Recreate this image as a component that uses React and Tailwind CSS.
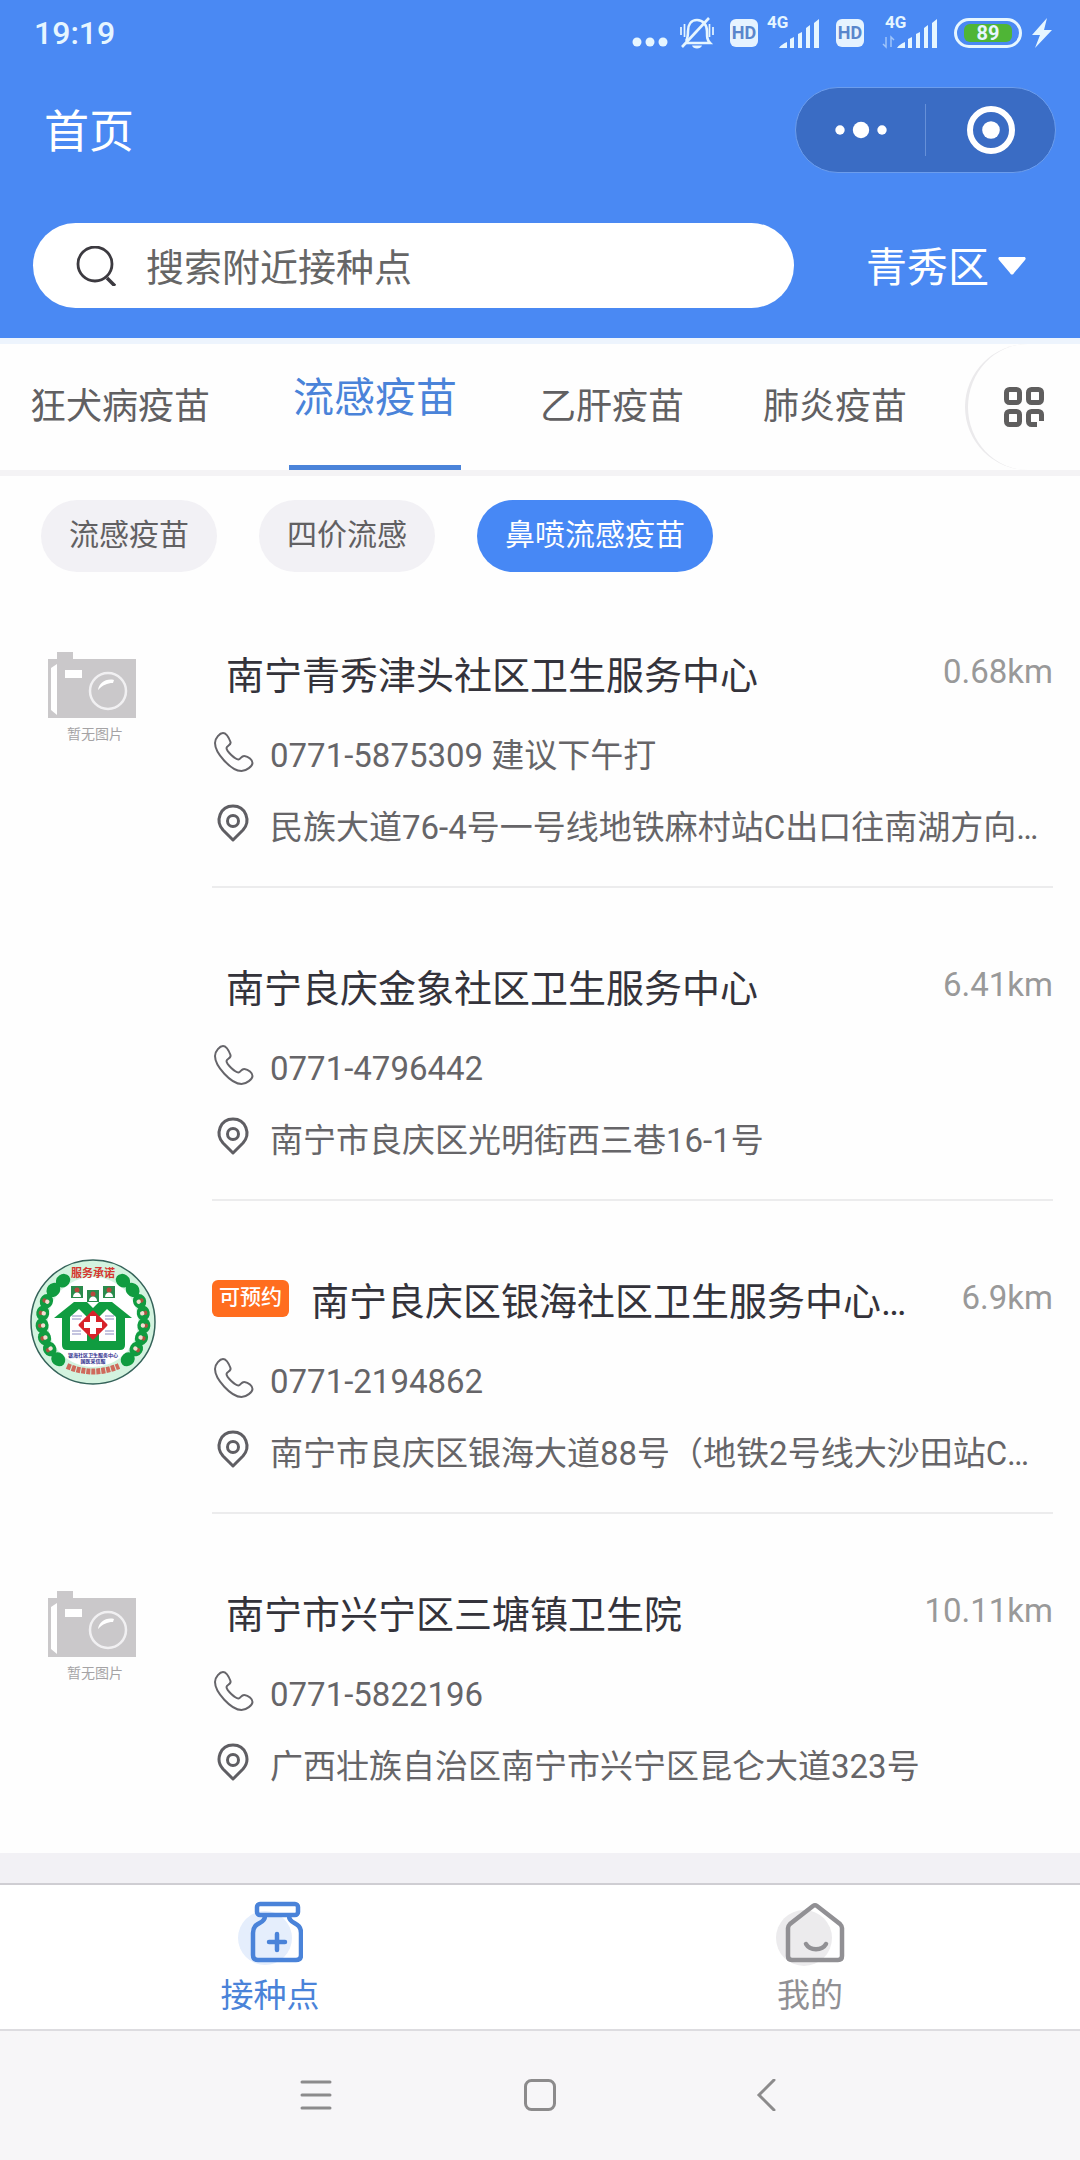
import React, { useState } from "react";

const areas = ["青秀区", "兴宁区", "良庆区", "西乡塘区"];
const vaccines = ["狂犬病疫苗", "流感疫苗", "乙肝疫苗", "肺炎疫苗"];
const subTypes = ["流感疫苗", "四价流感", "鼻喷流感疫苗"];

const clinics = [
  {
    id: 1,
    name: "南宁青秀津头社区卫生服务中心",
    distance: "0.68km",
    phone: "0771-5875309 建议下午打",
    address: "民族大道76-4号一号线地铁麻村站C出口往南湖方向…",
    image: "placeholder",
  },
  {
    id: 2,
    name: "南宁良庆金象社区卫生服务中心",
    distance: "6.41km",
    phone: "0771-4796442",
    address: "南宁市良庆区光明街西三巷16-1号",
  },
  {
    id: 3,
    name: "南宁良庆区银海社区卫生服务中心…",
    distance: "6.9km",
    phone: "0771-2194862",
    address: "南宁市良庆区银海大道88号（地铁2号线大沙田站C…",
    image: "emblem",
    bookable: true,
  },
  {
    id: 4,
    name: "南宁市兴宁区三塘镇卫生院",
    distance: "10.11km",
    phone: "0771-5822196",
    address: "广西壮族自治区南宁市兴宁区昆仑大道323号",
    image: "placeholder",
  },
];

/* ---------- status bar ---------- */

const BellOff = () => (
  <svg width="34" height="34" viewBox="0 0 34 34" fill="none" stroke="currentColor" strokeWidth="2.6">
    <path d="M5 27h25c-3-3-3-6-3-12 0-6-4-11-10-11S8 9 8 15c0 4 0 7-2 10" />
    <path d="M2 31 29 2" />
    <path d="M1 11v8M4.500 8v13M29.500 8v13M33 11v8" strokeWidth="1.700" />
    <path d="M12 29.500h10c-1 4-9 4-10 0Z" fill="currentColor" stroke="none" />
  </svg>
);

const HdBadge = () => (
  <span className="flex h-7 w-7 items-center justify-center rounded-md bg-[#e6f3ff] text-lg font-bold text-[#5a86cc]">
    HD
  </span>
);

const Signal = ({ arrows }) => (
  <svg width="56" height="50" viewBox="0 -8 56 50" fill="currentColor">
    <text x="3" y="12" fontSize="17" fontWeight="700">4G</text>
    <path d="M15 32c2-3 4-4 8-6v6ZM26 32V23l4-2v11ZM34 32V18l4-2v16ZM42 32V12l4-3v23ZM50 32V7l5-4v29Z" />
    {arrows && (
      <path d="M4 21v10L1 28M9 31V21l3 3" fill="none" stroke="currentColor" strokeWidth="1.500" opacity=".55" />
    )}
  </svg>
);

const StatusBar = () => (
  <div className="flex h-[66px] items-center justify-between pr-7 pl-[34px] text-[#e6f6ff]">
    <span className="text-[32px] font-medium">19:19</span>
    <div className="flex items-center">
      <svg width="36" height="34" viewBox="0 0 36 34" fill="currentColor" className="mr-3">
        <circle cx="5" cy="26" r="4.500" />
        <circle cx="18" cy="26" r="4.500" />
        <circle cx="31" cy="26" r="4.500" />
      </svg>
      <BellOff />
      <span className="ml-4"><HdBadge /></span>
      <span className="ml-[6px]"><Signal /></span>
      <span className="ml-4"><HdBadge /></span>
      <span className="ml-[18px]"><Signal arrows /></span>
      <span className="ml-4 flex h-[30px] w-[68px] rounded-full border-[3px] border-current p-[3px]">
        <span className="mx-1 flex flex-1 items-center justify-center rounded-md bg-[#4fb536] text-xl font-bold">
          89
        </span>
      </span>
      <svg width="20" height="30" viewBox="0 0 20 30" fill="currentColor" className="ml-[10px]">
        <path d="M15 0 0 17h8L3 30 20 12h-8Z" />
      </svg>
    </div>
  </div>
);

/* ---------- header ---------- */

const TitleBar = () => (
  <div className="flex h-32 items-center justify-between pr-6 pl-11">
    <h1 className="pt-[6px] text-[45px] text-white">首页</h1>
    <div className="flex h-[86px] w-[261px] items-center rounded-full border border-[#6c9dec] bg-[#3a6cc4]">
      <button type="button" aria-label="更多" className="flex flex-1 justify-center">
        <svg width="52" height="18" viewBox="0 0 52 18" fill="#fff">
          <circle cx="5" cy="9" r="4.700" />
          <circle cx="26" cy="9" r="8.200" />
          <circle cx="47" cy="9" r="4.700" />
        </svg>
      </button>
      <span className="h-[52px] w-px bg-[#6690d8]" />
      <button type="button" aria-label="关闭" className="flex flex-1 justify-center">
        <svg width="48" height="48" viewBox="0 0 48 48">
          <circle cx="24" cy="24" r="21" fill="none" stroke="#fff" strokeWidth="6" />
          <circle cx="24" cy="24" r="8.800" fill="#fff" />
        </svg>
      </button>
    </div>
  </div>
);

const SearchBar = () => {
  const [keyword, setKeyword] = useState("");
  const [area, setArea] = useState(areas[0]);

  return (
    <div className="flex items-center justify-between pt-[29px] pr-[54px] pb-[30px] pl-[33px]">
      <label className="flex h-[85px] w-[761px] items-center rounded-full bg-white pl-[43px]">
        <svg width="40" height="40" viewBox="0 0 40 40" fill="none" stroke="#3c3a40" strokeWidth="2.800">
          <circle cx="19" cy="18" r="17" />
          <path d="m31 32 8 8" strokeWidth="3.500" />
        </svg>
        <input
          type="text"
          aria-label="搜索附近接种点"
          placeholder="搜索附近接种点"
          value={keyword}
          onChange={(e) => setKeyword(e.target.value)}
          className="ml-[30px] min-w-0 flex-1 bg-transparent pt-[6px] text-[38px] text-[#555] outline-none placeholder:text-[#666]"
        />
      </label>
      <label className="flex items-center gap-2 text-white">
        <select
          aria-label="区域"
          value={area}
          onChange={(e) => setArea(e.target.value)}
          className="w-[124px] appearance-none bg-transparent pt-[6px] text-[41px] outline-none"
        >
          {areas.map((item) => (
            <option key={item} value={item}>{item}</option>
          ))}
        </select>
        <svg width="28" height="18" viewBox="0 0 28 18" fill="#fff">
          <path d="M2 0h24c2 0 2 2 1 3L16 16c-1 2-3 2-4 0L1 3C0 2 0 0 2 0Z" />
        </svg>
      </label>
    </div>
  );
};

/* ---------- vaccine tabs ---------- */

const VaccineTabs = () => {
  const [active, setActive] = useState("流感疫苗");

  return (
    <nav className="flex h-[138px] items-stretch border-y-[6px] border-t-[#edf4fd] border-b-[#f4f3f5] pl-[30px]">
      <div className="flex flex-1 justify-between pr-[58px]">
        {vaccines.map((name) => (
          <button
            key={name}
            type="button"
            onClick={() => setActive(name)}
            className={
              name === active
                ? "border-b-[5px] border-[#4a83d9] px-1 pb-3 text-[41px] text-[#4a83d9]"
                : "text-[36px] text-[#616062]"
            }
          >
            {name}
          </button>
        ))}
      </div>
      <button
        type="button"
        aria-label="全部疫苗"
        className="flex w-[115px] items-center justify-center rounded-l-full border-l-3 border-[#ebeaec]"
      >
        <svg width="40" height="40" viewBox="0 0 40 40" fill="none" stroke="#5f5e5e" strokeWidth="5">
          <rect x="2.500" y="2.500" width="13" height="13" rx="3" />
          <rect x="24.500" y="2.500" width="13" height="13" rx="3" />
          <rect x="2.500" y="24.500" width="13" height="13" rx="3" />
          <path d="M37.500 34v-6.500a3 3 0 0 0-3-3h-7a3 3 0 0 0-3 3v7a3 3 0 0 0 3 3H33" />
        </svg>
      </button>
    </nav>
  );
};

const SubTypes = () => {
  const [active, setActive] = useState("鼻喷流感疫苗");

  return (
    <div className="flex gap-[42px] px-[41px] pt-6">
      {subTypes.map((name) => (
        <button
          key={name}
          type="button"
          onClick={() => setActive(name)}
          className={`h-[72px] rounded-full px-7 pb-1 text-[30px] ${
            name === active ? "bg-[#4788f5] text-white" : "bg-[#f2f1f5] text-[#616062]"
          }`}
        >
          {name}
        </button>
      ))}
    </div>
  );
};

/* ---------- clinic list ---------- */

const Placeholder = () => (
  <div className="flex flex-col items-center pt-[19px] pr-[2px]">
    <svg width="88" height="66" viewBox="0 0 88 66">
      <path d="M9 0h16v7h63v59H0V7h9Z" fill="#cac8ca" />
      <path d="M3 16l6-4v51l-6-5Z" fill="#fff" />
      <rect x="17" y="18" width="17" height="8" fill="#fff" />
      <circle cx="60" cy="39" r="18" fill="none" stroke="#f1f0f2" strokeWidth="2.500" />
      <path d="M50 38c1-7 8-12 16-10l-1 3c-6 0-10 2-15 7Z" fill="#fff" />
    </svg>
    <span className="mt-[6px] pl-[6px] text-[14px] text-[#a5a3a5]">暂无图片</span>
  </div>
);

const Leaf = ({ angle, dot }) => (
  <g transform={`rotate(${angle} 63 63)`}>
    <ellipse cx="63" cy="12" rx="7.500" ry="6.500" fill="#109c40" />
    {dot && (
      <>
        <circle cx="63" cy="10" r="2.200" fill="#a8543f" />
        <circle cx="63" cy="13" r="2.200" fill="#f3ded2" />
      </>
    )}
  </g>
);

const Emblem = () => (
  <svg width="126" height="126" viewBox="0 0 126 126">
    <circle cx="63" cy="63" r="62" fill="#d3f3df" stroke="#35635a" strokeWidth="1.500" />
    <circle cx="63" cy="63" r="45" fill="#fff" />
    {[36, 51, 66, 80, 94, 108, 122, 137].map((angle, i) => (
      <g key={angle}>
        <Leaf angle={angle} dot={i > 1 && i < 7} />
        <Leaf angle={-angle} dot={i > 1 && i < 7} />
      </g>
    ))}
    <text x="63" y="18" fontSize="11" fontWeight="700" fill="#d6362f" textAnchor="middle">服务承诺</text>
    {[[41, 27], [57, 31], [73, 27]].map(([x, y]) => (
      <g key={x}>
        <rect x={x} y={y} width="12" height="12" fill="#2a8b4c" />
        <circle cx={x + 6} cy={y + 4} r="2.500" fill="#b8483c" />
        <path d={`M${x + 2} ${y + 11}c0-6 8-6 8 0Z`} fill="#fff" />
      </g>
    ))}
    <path d="M24 59 44 43h13l6 6 6-6h13l20 16h-7v27q0 5-5 5H37q-5 0-5-5V59Z" fill="#109c40" />
    <path d="M40 58l9-8 8 8v24H40ZM69 58l8-8 9 8v24H69Z" fill="#fff" />
    <path d="M42 57h10M42 60h9M42 72h9M42 75h9M75 57h9M75 60h9M75 72h9M75 75h9" stroke="#8a8ac0" strokeWidth="1" />
    <path d="M63 53 76 66 63 79 50 66Z" fill="#d8232a" stroke="#d8232a" strokeWidth="3" strokeLinejoin="round" />
    <path d="M60 57h6v6h6v6h-6v6h-6v-6h-6v-6h6Z" fill="#fff" />
    <text x="63" y="98" fontSize="5" fontWeight="700" fill="#2d2d8c" textAnchor="middle">银海社区卫生服务中心</text>
    <text x="63" y="104" fontSize="5" fontWeight="700" fill="#2d2d8c" textAnchor="middle">国医采信服</text>
    <path d="M37 107q26 11 52 0" fill="none" stroke="#cf6a5c" strokeWidth="6" strokeDasharray="4 1" />
  </svg>
);

const PhoneIcon = () => (
  <svg width="40" height="40" viewBox="0 0 40 40" fill="none" stroke="#66656a" strokeWidth="2" strokeLinejoin="round" className="mb-2 shrink-0">
    <path d="M9 1c3 0 6 5 7.500 9 1 3-4 4-4 6 0 3 8 11 12 11.500 2 0 3-4 6-3.500 4 .5 8 4 8 7s-6 8-11 8C17 39 1 21 1 11 1 6 6 1 9 1Z" />
  </svg>
);

const PinIcon = () => (
  <svg width="40" height="40" viewBox="0 0 40 40" fill="none" stroke="#5f5e63" strokeWidth="3" className="mb-2 shrink-0">
    <path d="M19 36 9 26C1 17 6 2 19 2S37 17 29 26Z" strokeLinejoin="round" />
    <circle cx="19" cy="17" r="5.500" />
  </svg>
);

const ClinicRow = ({ clinic, last }) => (
  <li className="flex h-[313px] pr-[27px] pl-[30px]">
    <div className="w-[126px] shrink-0 pt-[58px]">
      {clinic.image === "placeholder" && <Placeholder />}
      {clinic.image === "emblem" && <Emblem />}
    </div>
    <div className={`ml-14 min-w-0 flex-1 pt-[73px] ${last ? "" : "border-b-2 border-[#ececed]"}`}>
      <div className="flex h-14 items-center">
        {clinic.bookable && (
          <span className="mr-2 mb-2 flex h-[37px] w-[77px] shrink-0 items-center justify-center rounded-md bg-[#ff6d1f] text-[21px] font-medium text-white">
            可预约
          </span>
        )}
        <h2 className="truncate pl-[14px] text-[38px] text-[#34333b]">{clinic.name}</h2>
        <span className="ml-auto pb-2 text-[33px] text-[#999]">{clinic.distance}</span>
      </div>
      <div className="mt-7 flex h-12 items-center gap-4 pl-[2px] text-[33px] text-[#666568]">
        <PhoneIcon />
        <span>{clinic.phone}</span>
      </div>
      <div className="mt-6 flex h-12 items-center gap-4 pl-[2px] text-[33px] text-[#666568]">
        <PinIcon />
        <span className="truncate">{clinic.address}</span>
      </div>
    </div>
  </li>
);

/* ---------- bottom bars ---------- */

const BottomTabs = () => (
  <nav className="grid h-[148px] grid-cols-2 border-y-2 border-t-[#cfced3] border-b-[#dddce0] bg-white text-[33px]">
    <a href="#clinics" className="flex flex-col items-center gap-1 pt-4 text-[#4a83d9]">
      <svg width="66" height="66" viewBox="0 0 66 66" fill="none" stroke="currentColor" strokeWidth="4.500">
        <circle cx="28" cy="37" r="27" fill="#e5eefc" stroke="none" />
        <rect x="20" y="3" width="41" height="11" rx="3" />
        <path d="M28 15c0 9-12 5-12 17v22q0 5 5 5h38q5 0 5-5V32c0-12-12-8-12-17" />
        <path d="M40 33v16M32 41h16" strokeLinecap="round" />
      </svg>
      <span>接种点</span>
    </a>
    <a href="#mine" className="flex flex-col items-center gap-1 pt-4 text-[#919094]">
      <svg width="70" height="66" viewBox="0 0 70 66" fill="none" stroke="currentColor" strokeWidth="4.500">
        <circle cx="29" cy="37" r="28" fill="#ecebed" stroke="none" />
        <path d="M38 5q2-1.500 4 0l23 18q2 2 2 4v28q0 4-4 4H17q-4 0-4-4V27q0-2 2-4Z" />
        <path d="M31 43c4 7 16 7 20 0" strokeLinecap="round" />
      </svg>
      <span>我的</span>
    </a>
  </nav>
);

const SystemNav = () => (
  <div className="flex h-[129px] items-center justify-center gap-40 bg-[#f7f6f8] pb-[2px] text-[#8c8b8c]">
    <button type="button" aria-label="菜单" className="flex w-16 justify-center">
      <svg width="32" height="32" viewBox="0 0 32 32" fill="none" stroke="currentColor" strokeWidth="3" strokeLinecap="round">
        <path d="M2 3h28M2 16h28M2 29h28" />
      </svg>
    </button>
    <button type="button" aria-label="主屏幕" className="flex w-16 justify-center">
      <svg width="32" height="32" viewBox="0 0 32 32" fill="none" stroke="currentColor" strokeWidth="3">
        <rect x="1.500" y="1.500" width="29" height="29" rx="6" />
      </svg>
    </button>
    <button type="button" aria-label="返回" className="flex w-16 justify-center">
      <svg width="32" height="32" viewBox="0 0 32 32" fill="none" stroke="currentColor" strokeWidth="3" strokeLinecap="round">
        <path d="M26 1 11 16l15 15" />
      </svg>
    </button>
  </div>
);

const App = () => {
  return (
    <div className="flex min-h-screen flex-col bg-[#fefefe] font-[Roboto,'Noto_Sans_CJK_SC',sans-serif]">
      <header className="bg-[#4a89f3]">
        <StatusBar />
        <TitleBar />
        <SearchBar />
      </header>
      <VaccineTabs />
      <main className="flex-1">
        <SubTypes />
        <ul className="pt-[3px] pb-[26px]">
          {clinics.map((clinic, i) => (
            <ClinicRow key={clinic.id} clinic={clinic} last={i === clinics.length - 1} />
          ))}
        </ul>
      </main>
      <div className="h-[30px] bg-[#f2f1f5]" />
      <BottomTabs />
      <SystemNav />
    </div>
  );
};

export default App;
